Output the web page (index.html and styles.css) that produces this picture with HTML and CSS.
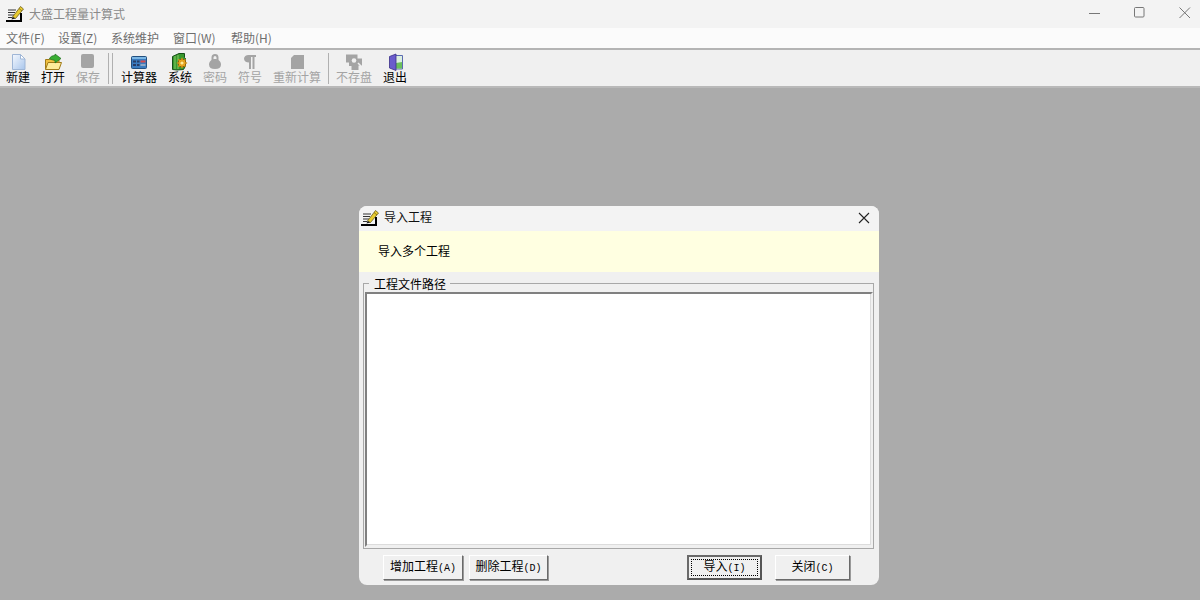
FILE: index.html
```html
<!DOCTYPE html>
<html lang="zh-CN">
<head>
<meta charset="utf-8">
<title>大盛工程量计算式</title>
<link rel="stylesheet" href="styles.css">
</head>
<body>
<svg class="defs" width="0" height="0" aria-hidden="true">
  <defs>
    <symbol id="app" viewBox="0 0 18 18">
      <path d="M1 3h13v12H1z" fill="#f4f4f4"/>
      <path d="M2 5h8M2 7.500h7M2 10h6M2 12.500h4" stroke="#333" stroke-width="1"/>
      <path d="M0 15h16v2H0z" fill="#000"/>
      <path d="M14 8h2v8h-2z" fill="#000"/>
      <path d="M6.500 12L14.500 1.500l3 2.500-8 9.500z" fill="#e8cc30" stroke="#5a4a10" stroke-width=".7"/>
      <path d="M6.500 12l-1 2.500 4-1z" fill="#222"/>
      <path d="M13 3.500l3 2.500" stroke="#7a6410" stroke-width=".8"/>
    </symbol>
  </defs>
</svg>
<div class="app">
  <header class="titlebar">
    <svg class="app-icon"><use href="#app"/></svg>
    <span class="app-title">大盛工程量计算式</span>
    <div class="win-controls">
      <svg class="win-btn" viewBox="0 0 12 12"><path d="M0 6.500h11" stroke="#777"/></svg>
      <svg class="win-btn" viewBox="0 0 12 12"><rect x=".5" y=".5" width="9.500" height="9.500" rx="1" fill="none" stroke="#777"/></svg>
      <svg class="win-btn" viewBox="0 0 12 12"><path d="M.5 .5l10.500 10.500M11 .5L.5 11" stroke="#777"/></svg>
    </div>
  </header>
  <nav class="menubar">
    <span class="menu-item m-file">文件(F)</span>
    <span class="menu-item m-set">设置(Z)</span>
    <span class="menu-item m-sys">系统维护</span>
    <span class="menu-item m-win">窗口(W)</span>
    <span class="menu-item m-help">帮助(H)</span>
  </nav>
  <div class="toolbar">
    <div class="tool w-new">
      <svg class="tool-icon" viewBox="0 0 18 18"><defs><linearGradient id="pg" x1="0" y1="0" x2="1" y2="1"><stop offset="0" stop-color="#f4f8fe"/><stop offset="1" stop-color="#a9c6ec"/></linearGradient></defs><path d="M3.500 1.500h8l4.500 4.500v10.500H3.500z" fill="url(#pg)" stroke="#9fb6d6"/><path d="M11.500 1.500V6H16z" fill="#fff" stroke="#9fb6d6"/></svg>
      <span>新建</span>
    </div>
    <div class="tool w-open">
      <svg class="tool-icon" viewBox="0 0 18 18"><path d="M1.500 6.500h4l1-1.500h3l1 1.500h4.500v9.500H1.500z" fill="#f0c040" stroke="#a07a18"/><path d="M1.500 16.500l2.500-7h13.500l-2.500 7z" fill="#fdeb9a" stroke="#a07a18"/><path d="M5.500 6C6 3.500 8.500 2.500 11 2.500V1l6 4.500-6 4.500V7.500C9 7 7 6.500 5.500 6z" fill="#38ae32" stroke="#1e6e1c" stroke-width=".7"/></svg>
      <span>打开</span>
    </div>
    <div class="tool w-save disabled">
      <svg class="tool-icon" viewBox="0 0 18 18"><rect x="2" y="1" width="13" height="14" rx="2" fill="#a4a4a4"/></svg>
      <span>保存</span>
    </div>
    <i class="grip"></i>
    <div class="tool w-calc">
      <svg class="tool-icon" viewBox="0 0 18 18"><rect x="1.500" y="3.500" width="15" height="12" rx="1" fill="#3b7cc0" stroke="#23507f"/><path d="M2 5h14" stroke="#8cc6ee" stroke-width="1.600"/><path d="M3 7.500h3v2H3zM7 7.500h2.500v2H7zM3 11h3v2H3zM7 11h2.500v2H7z" fill="#2a3e66"/><path d="M10.500 7.500h5v2h-5z" fill="#d84a4a"/><path d="M10.500 11h5v2h-5z" fill="#90a8c4"/></svg>
      <span>计算器</span>
    </div>
    <div class="tool w-sys">
      <svg class="tool-icon" viewBox="0 0 18 18"><path d="M1.500 3.500L8 .5h5.500v4l1 1V13l-2 3.500-6.500.5-4.500-.5z" fill="#38982e" stroke="#174f18"/><path d="M4 3v13M7 2v14" stroke="#8ed06c" stroke-width=".9"/><circle cx="11" cy="10" r="4" fill="#f0b020" stroke="#8a5e10"/><path d="M11 4.800v10.400M5.800 10h10.400M7.400 6.400l7.200 7.200M14.600 6.400l-7.200 7.200" stroke="#e09a18" stroke-width="1.200"/><circle cx="11" cy="10" r="1.600" fill="#fdeb9a"/></svg>
      <span>系统</span>
    </div>
    <div class="tool w-pass disabled">
      <svg class="tool-icon" viewBox="0 0 18 18"><path d="M9 6c3.500 0 6 2.500 6 5.500 0 3-2 4.500-6 4.500s-6-1.500-6-4.500C3 8.500 5.500 6 9 6z" fill="#a4a4a4"/><path d="M6.500 7.500V4.500a2.500 2.500 0 0 1 5 0V7.500" fill="none" stroke="#a4a4a4" stroke-width="2"/></svg>
      <span>密码</span>
    </div>
    <div class="tool w-sym disabled">
      <svg class="tool-icon" viewBox="0 0 18 18"><path d="M7.500 2H15v2h-1.500v12h-2V4H10v12H8V9.500C5 9.500 3 8 3 5.800 3 3.500 5 2 7.500 2z" fill="#a4a4a4"/></svg>
      <span>符号</span>
    </div>
    <div class="tool w-recalc disabled">
      <svg class="tool-icon" viewBox="0 0 18 18"><path d="M3 5l3-3h10v14H3z" fill="#a4a4a4"/></svg>
      <span>重新计算</span>
    </div>
    <i class="sep"></i>
    <div class="tool w-nosave disabled">
      <svg class="tool-icon" viewBox="0 0 18 18"><path d="M1 1.500h11.500v4H17v7h-3.500V17H6.500v-4H4V9.500H1z" fill="#a4a4a4"/><circle cx="9" cy="7.500" r="2.300" fill="#f0f0f0"/><path d="M13 10l3 3" stroke="#f0f0f0" stroke-width="1.500"/></svg>
      <span>不存盘</span>
    </div>
    <div class="tool w-exit">
      <svg class="tool-icon" viewBox="0 0 18 18"><path d="M9.500 2.500h7v13.500h-7z" fill="#dcefe0" stroke="#5a6ab0"/><path d="M10 10l6 -1v6.500h-6z" fill="#6cc05c"/><path d="M3.500 3.500L10 1v16.500l-6.500-2.500z" fill="#6a5ccc" stroke="#3a2e88" stroke-width=".8"/></svg>
      <span>退出</span>
    </div>
  </div>
  <main class="workspace">
    <section class="dialog">
      <div class="dlg-title">
        <svg class="dlg-icon"><use href="#app"/></svg>
        <span class="dlg-name">导入工程</span>
        <svg class="dlg-close" viewBox="0 0 12 12"><path d="M1 1l10 10M11 1L1 11" stroke="#222" stroke-width="1.100"/></svg>
      </div>
      <div class="dlg-banner">导入多个工程</div>
      <fieldset class="dlg-group">
        <legend>工程文件路径</legend>
        <div class="dlg-list"></div>
      </fieldset>
      <div class="dlg-actions">
        <button class="btn btn-add">增加工程<span class="key">(A)</span></button>
        <button class="btn btn-del">删除工程<span class="key">(D)</span></button>
        <button class="btn btn-import"><span class="focus"><span>导入<span class="key">(I)</span></span></span></button>
        <button class="btn btn-close">关闭<span class="key">(C)</span></button>
      </div>
    </section>
  </main>
</div>
</body>
</html>
```

FILE: styles.css
```css
* { box-sizing: border-box; }
html, body { margin: 0; height: 100%; overflow: hidden; }
body { font: 12px/14px "Noto Sans CJK SC", "Liberation Sans", sans-serif; color: #000; }
.defs { position: absolute; }
.app { width: 1200px; height: 600px; display: flex; flex-direction: column; background: #f0f0f0; }

.titlebar { height: 28px; flex: none; display: flex; align-items: center; padding-left: 6px; background: #f3f3f3; }
.app-icon { width: 18px; height: 18px; flex: none; }
.app-title { margin-left: 5px; color: #8a8a8a; font-size: 12px; }
.win-controls { margin-left: auto; display: flex; padding-right: 9px; }
.win-btn { width: 12px; height: 12px; margin-left: 33px; margin-top: -2px; }

.menubar { height: 22px; flex: none; display: flex; align-items: center; padding: 0 0 1px 6px; background: #fbfbfb; border-bottom: 2px solid #b4b4b4; color: #6e6e6e; }
.menu-item { white-space: nowrap; }
.m-file { width: 52px; }
.m-set { width: 53px; }
.m-sys { width: 62px; }
.m-win { width: 58px; }

.toolbar { height: 38px; flex: none; display: flex; align-items: flex-start; padding-top: 3px; background: #f0f0f0; border-bottom: 2px solid #b9b9b9; }
.tool { flex: none; display: flex; flex-direction: column; align-items: center; font-size: 12px; line-height: 14px; white-space: nowrap; }
.tool-icon { width: 18px; height: 18px; margin-bottom: -1px; flex: none; }
.tool.disabled { color: #a4a4a4; }
.w-new { width: 24px; margin: 0 0 0 6px; }
.w-open { width: 24px; margin-left: 11px; }
.w-save { width: 24px; margin-left: 11px; }
.grip { width: 5px; height: 31px; margin: 0 0 0 8px; border-left: 1px solid #b0b0b0; border-right: 1px solid #b0b0b0; }
.w-calc { width: 36px; margin-left: 8px; }
.w-sys { width: 24px; margin-left: 11px; }
.w-pass { width: 24px; margin-left: 11px; }
.w-sym { width: 24px; margin-left: 11px; }
.w-recalc { width: 48px; margin-left: 11px; }
.sep { width: 1px; height: 31px; margin: 0 0 0 7px; background: #b0b0b0; }
.w-nosave { width: 36px; margin-left: 7px; }
.w-exit { width: 24px; margin-left: 11px; }

.workspace { flex: 1; position: relative; background: #ababab; }
.dialog { position: absolute; left: 359px; top: 118px; width: 520px; height: 379px; display: flex; flex-direction: column; background: #f0f0f0; border-radius: 8px; overflow: hidden; }
.dlg-title { height: 25px; flex: none; display: flex; align-items: center; padding: 0 0 1px 2px; background: #f3f3f3; }
.dlg-icon { width: 18px; height: 18px; flex: none; }
.dlg-name { margin-left: 5px; color: #111; padding-bottom: 2px; }
.dlg-close { width: 12px; height: 12px; margin-left: auto; margin-right: 9px; }
.dlg-banner { height: 41px; flex: none; display: flex; align-items: center; padding: 0 0 2px 19px; background: #ffffe1; }
.dlg-group { height: 273px; flex: none; margin: 4px 5px 0 4px; padding: 2px 0 0 1px; border: 1px solid #a8a8a8; border-radius: 0; min-width: 0; }
.dlg-group legend { margin-left: 4px; padding: 2px 4px 0 5px; font-size: 12px; line-height: 12px; }
.dlg-list { height: 255px; background: #fff; border: 2px solid; border-color: #808080 #f0f0f0 #f0f0f0 #808080; box-shadow: inset -1px -1px 0 #dcdcdc; }
.dlg-actions { display: flex; margin-top: 6px; padding-left: 24px; }
.btn { height: 25px; padding: 0; font: 12px/14px "Noto Sans CJK SC", "Liberation Sans", sans-serif; color: #000; background: #f0f0f0; border: 1px solid; border-color: #fff #6a6a6a #6a6a6a #fff; box-shadow: 1px 1px 0 #9a9a9a; }
.key { font: 10px/14px "Liberation Mono", monospace; }
.btn-add { width: 80px; }
.btn-del { width: 79px; margin-left: 6px; }
.btn-import { width: 75px; margin-left: 139px; border: 2px solid; border-color: #6a6a6a #555 #555 #6a6a6a; box-shadow: none; padding: 2px; }
.focus { display: flex; align-items: center; justify-content: center; height: 100%; border: 1px dotted #000; }
.btn-close { width: 75px; margin-left: 13px; }
```
